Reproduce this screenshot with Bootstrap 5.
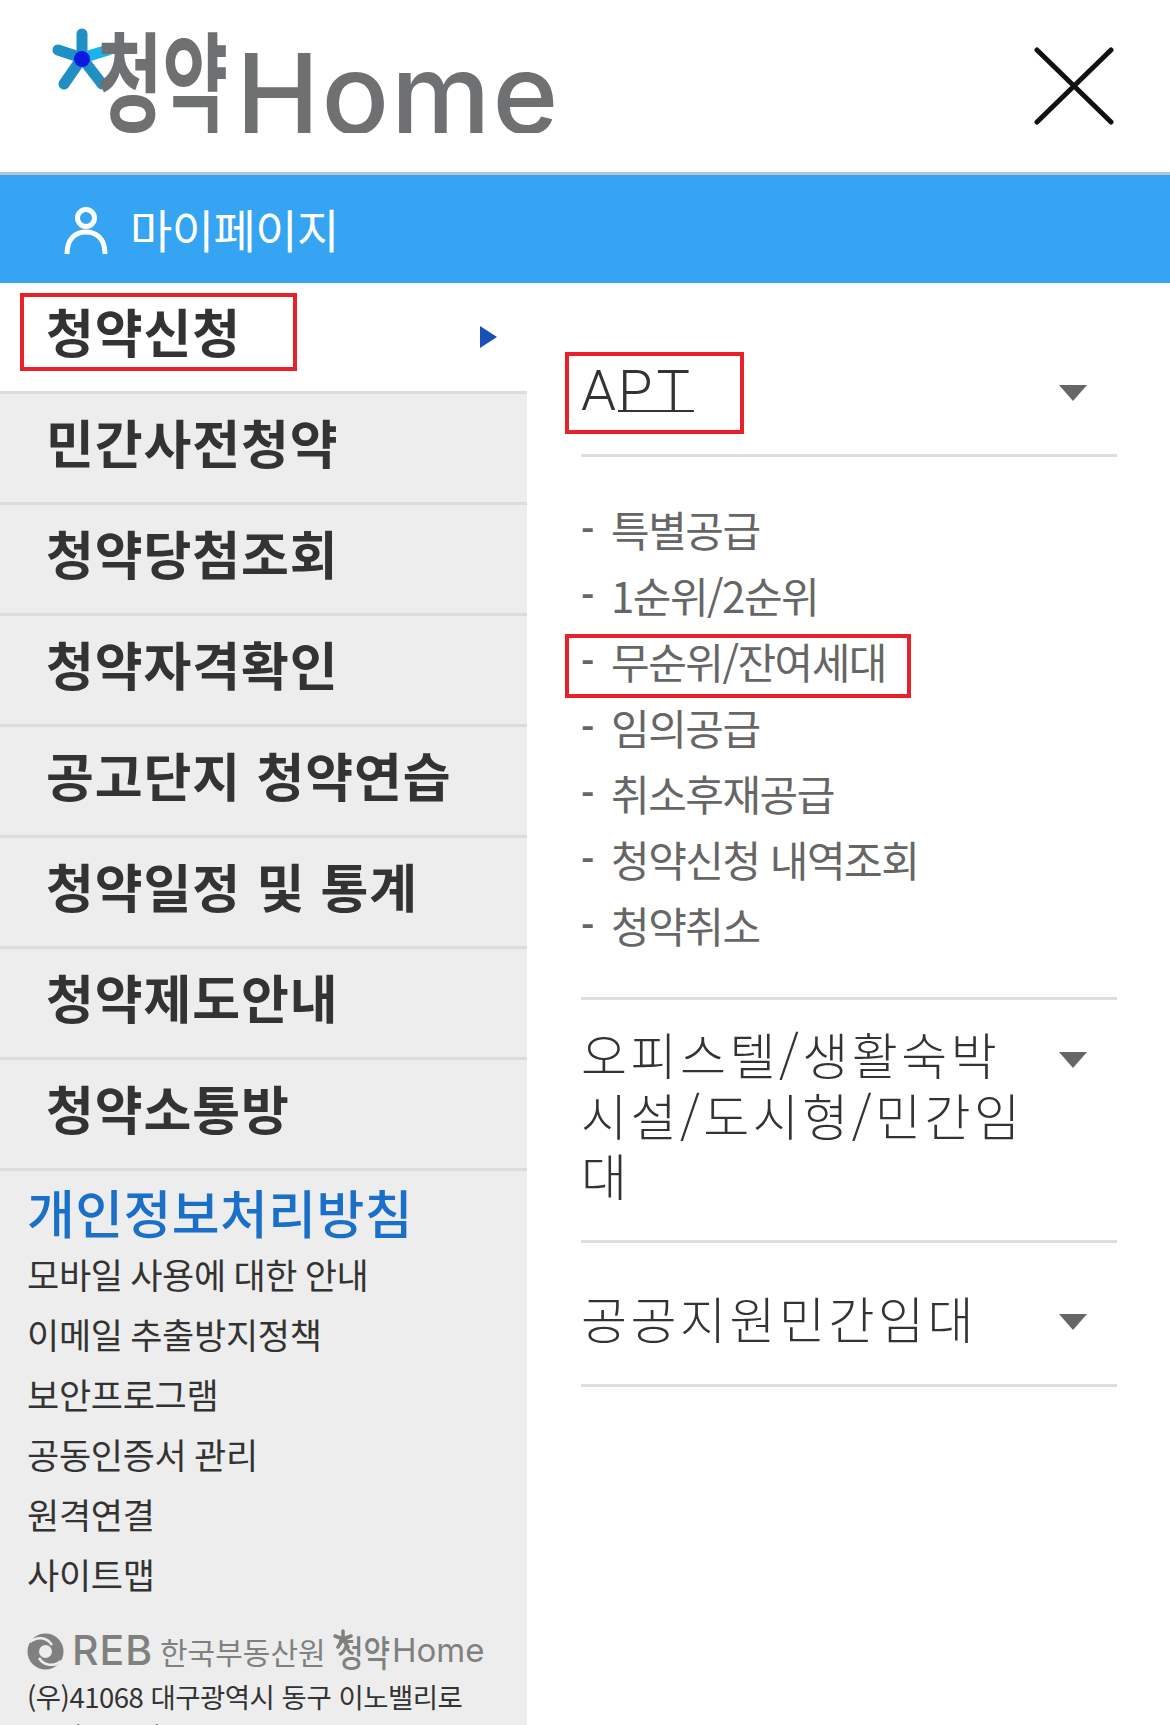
<!DOCTYPE html>
<html lang="ko">
<head>
  <meta charset="UTF-8">
  <meta name="viewport" content="width=device-width, initial-scale=1.0">
  <title>청약Home</title>
  <link href="https://cdn.jsdelivr.net/npm/bootstrap@5.3.0/dist/css/bootstrap.min.css" rel="stylesheet">
  <style>
    html, body { height: 1725px; overflow: hidden; }
    body { font-family: "Noto Sans CJK KR", "Noto Sans", sans-serif; background: #fff; position: relative; }

    .top-head { height: 172px; padding: 0 56px 0 52px; }
    .brand { position: relative; height: 133px; width: 520px; color: #6f7072; text-decoration: none; display: flex; align-items: flex-start; padding-left: 45px; overflow: hidden; align-self: flex-start; }
    .brand-kr { display: inline-block; font-size: 108px; font-weight: 700; line-height: 1; margin-top: 22px; width: 139px; white-space: nowrap; transform: scaleX(.66); transform-origin: left; }
    .brand-en { font-family: Inter, sans-serif; font-size: 112px; font-weight: 500; line-height: 1; margin-top: 37px; letter-spacing: 2px; }
    .brand-star { position: absolute; left: 0; top: 28px; }

    .my-bar { height: 111px; background: #35a4f3; border-top: 3px solid #b7c6d6; padding: 4px 0 0 64px; color: #fff; font-size: 46px; gap: 22px; letter-spacing: -.6px; }
    .my-bar span { padding-bottom: 5px; }

    .left-col { width: 527px; background: #ededed; }
    .right-col { padding: 0 53px 0 54px; }

    .menu-row { height: 111px; padding: 0 0 12px 46px; font-size: 52px; font-weight: 700; color: #333; border-bottom: 3px solid #dcdcdc; letter-spacing: .9px; line-height: 1; }
    .menu-row.is-open { background: #fff; height: 111px; padding-right: 30px; }
    .arrow-r { width: 0; height: 0; border-left: 17px solid #1a4fb5; border-top: 11px solid transparent; border-bottom: 11px solid transparent; margin-top: 12px; }

    .foot-links { padding: 8px 0 0 27px; }
    .policy { font-size: 52px; font-weight: 500; color: #1a6fc9; line-height: 65px; letter-spacing: .4px; }
    .foot-link { font-size: 35px; color: #333; line-height: 60px; letter-spacing: -.3px; word-spacing: -2px; }
    .org-row { margin-top: 22px; height: 50px; color: #80817f; white-space: nowrap; }
    .org-en { font-family: Inter, sans-serif; font-size: 41px; font-weight: 500; margin-left: 8px; width: 88px; letter-spacing: 1px; }
    .org-kr { font-size: 30px; width: 173px; }
    .org-brand { position: relative; display: flex; align-items: center; }
    .org-brand-kr { display: inline-block; font-size: 36px; font-weight: 500; width: 55px; white-space: nowrap; transform: scaleX(.8); transform-origin: left; margin-left: 4px; }
    .org-brand-en { font-family: Inter, sans-serif; font-size: 33px; }
    .org-star { position: absolute; left: 0; top: 5px; }
    .address { font-size: 27.5px; color: #333; line-height: 40px; letter-spacing: -.5px; }

    .apt-head { height: 174px; color: #333; border-bottom: 3px solid #dedede; }
    .group-head { font-size: 50px; font-weight: 300; color: #333; line-height: 60.5px; letter-spacing: 3.5px; word-break: break-all; }
    .group-text { width: 452px; }
    .apt-label { font-family: Roboto, sans-serif; font-weight: 300; font-size: 56px; line-height: 1; letter-spacing: 2px; margin-top: 80px; }
    .apt-mark { text-decoration: underline; text-decoration-thickness: 2px; text-underline-offset: 0; text-decoration-skip-ink: none; letter-spacing: 4px; }
    .arrow-d { width: 0; height: 0; border-top: 16px solid #666; border-left: 14px solid transparent; border-right: 14px solid transparent; margin-right: 30px; }
    .sub-list { padding: 38px 0 40px; border-bottom: 3px solid #dedede; list-style: none; margin: 0; }
    .sub-list li { height: 66px; line-height: 66px; font-size: 42px; color: #666; letter-spacing: -1.5px; white-space: nowrap; }
    .sub-list li span { display: inline-block; width: 30px; font-size: 36px; font-weight: 700; letter-spacing: 0; vertical-align: 3px; }
    .group-one { height: 243px; padding-top: 23px; border-bottom: 3px solid #dedede; }
    .group-two { height: 144px; padding-top: 44px; border-bottom: 3px solid #dedede; }

    .red-box { position: absolute; border: 4px solid #e8202a; pointer-events: none; }
    .box-a { left: 20px; top: 293px; width: 277px; height: 78px; }
    .box-b { left: 565px; top: 352px; width: 179px; height: 82px; }
    .box-c { left: 565px; top: 634px; width: 346px; height: 64px; }
  </style>
</head>
<body>

  <header class="top-head d-flex justify-content-between align-items-center">
    <a class="brand" href="#">
      <svg class="brand-star" width="62" height="62" viewBox="0 0 62 62">
        <g fill="none" stroke-width="11" stroke-linecap="round">
          <path d="M30 30V6" stroke="#1f8fc4"/>
          <path d="M30 30L6 22" stroke="#1f8fc4"/>
          <path d="M30 30L56 22" stroke="#17b4ee"/>
          <path d="M30 30L12 56" stroke="#1f8fc4"/>
          <path d="M30 30L50 56" stroke="#1f8fc4"/>
        </g>
        <circle cx="30" cy="31" r="8" fill="#0a18e0"/>
      </svg>
      <span class="brand-kr">청약</span><span class="brand-en">Home</span>
    </a>
    <svg width="80" height="78" viewBox="0 0 80 78"><path d="M3 3L77 75M77 3L3 75" stroke="#111" stroke-width="5" fill="none" stroke-linecap="round"/></svg>
  </header>

  <div class="my-bar d-flex align-items-center">
    <svg width="44" height="48" viewBox="0 0 44 48"><circle cx="22" cy="11" r="8.5" fill="none" stroke="#fff" stroke-width="5"/><path d="M3 47C3 31 12 25 22 25S41 31 41 47" fill="none" stroke="#fff" stroke-width="5"/></svg>
    <span>마이페이지</span>
  </div>

  <main class="d-flex">
    <nav class="left-col flex-shrink-0">
      <div class="menu-row is-open d-flex align-items-center justify-content-between"><span>청약신청</span><i class="arrow-r"></i></div>
      <div class="menu-row d-flex align-items-center">민간사전청약</div>
      <div class="menu-row d-flex align-items-center">청약당첨조회</div>
      <div class="menu-row d-flex align-items-center">청약자격확인</div>
      <div class="menu-row d-flex align-items-center">공고단지 청약연습</div>
      <div class="menu-row d-flex align-items-center">청약일정 및 통계</div>
      <div class="menu-row d-flex align-items-center">청약제도안내</div>
      <div class="menu-row d-flex align-items-center">청약소통방</div>
      <div class="foot-links">
        <div class="policy">개인정보처리방침</div>
        <div class="foot-link">모바일 사용에 대한 안내</div>
        <div class="foot-link">이메일 추출방지정책</div>
        <div class="foot-link">보안프로그램</div>
        <div class="foot-link">공동인증서 관리</div>
        <div class="foot-link">원격연결</div>
        <div class="foot-link">사이트맵</div>
        <div class="org-row d-flex align-items-center">
          <svg width="37" height="37" viewBox="0 0 37 37">
            <circle cx="18.5" cy="18.5" r="18" fill="#80817f"/>
            <circle cx="18.5" cy="18.5" r="6.5" fill="#ededed"/>
            <path d="M3 9C10 3 20 4 25 12M34 28C27 34 17 33 12 25" fill="none" stroke="#ededed" stroke-width="2.5"/>
          </svg>
          <span class="org-en">REB</span><span class="org-kr">한국부동산원</span>
          <span class="org-brand">
            <svg class="org-star" width="20" height="20" viewBox="0 0 20 20"><path d="M10 10V2M10 10L2 7M10 10L18 7M10 10L5 18M10 10L15 18" stroke="#80817f" stroke-width="3.5" stroke-linecap="round" fill="none"/></svg>
            <span class="org-brand-kr">청약</span><span class="org-brand-en">Home</span>
          </span>
        </div>
        <div class="address">(우)41068 대구광역시 동구 이노밸리로<br>204(신서동)</div>
      </div>
    </nav>

    <section class="right-col flex-grow-1">
      <div class="apt-head d-flex justify-content-between align-items-start">
        <span class="apt-label">A<span class="apt-mark">PT</span></span>
        <i class="arrow-d" style="margin-top:102px"></i>
      </div>
      <ul class="sub-list">
        <li><span>-</span>특별공급</li>
        <li><span>-</span>1순위/2순위</li>
        <li><span>-</span>무순위/잔여세대</li>
        <li><span>-</span>임의공급</li>
        <li><span>-</span>취소후재공급</li>
        <li><span>-</span>청약신청 내역조회</li>
        <li><span>-</span>청약취소</li>
      </ul>
      <div class="group-one group-head d-flex justify-content-between align-items-start">
        <span class="group-text">오피스텔/생활숙박시설/도시형/민간임대</span>
        <i class="arrow-d" style="margin-top:29px"></i>
      </div>
      <div class="group-two group-head d-flex justify-content-between align-items-start">
        <span>공공지원민간임대</span>
        <i class="arrow-d" style="margin-top:27px"></i>
      </div>
    </section>
  </main>

  <div class="red-box box-a"></div>
  <div class="red-box box-b"></div>
  <div class="red-box box-c"></div>

</body>
</html>
